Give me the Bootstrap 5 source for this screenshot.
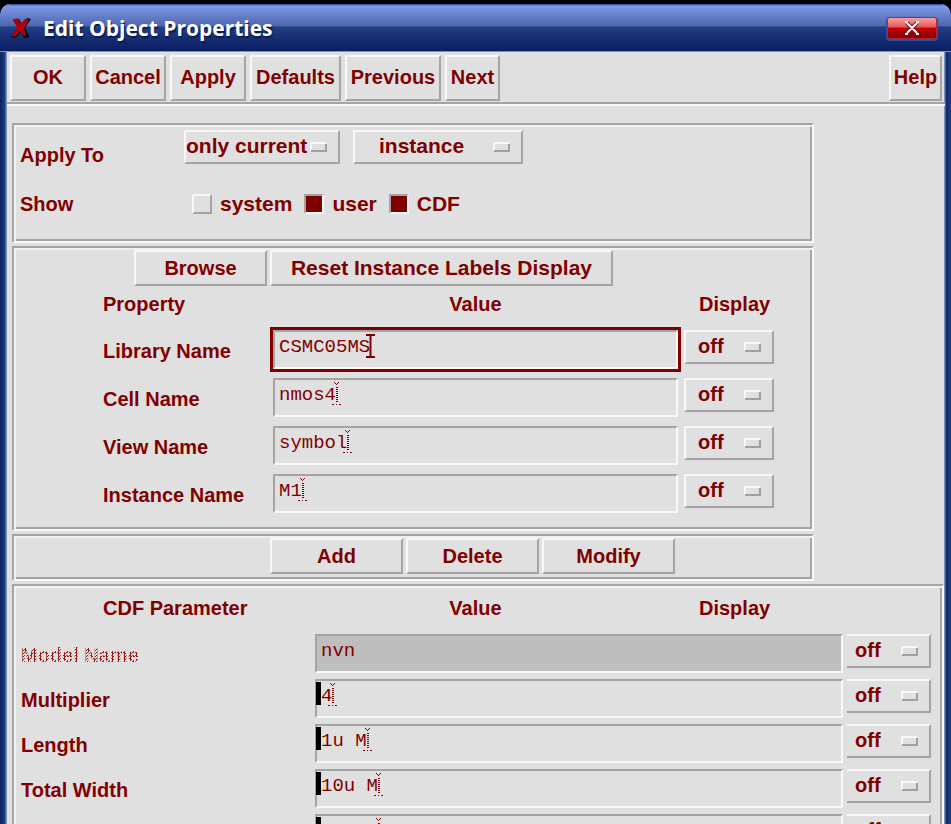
<!DOCTYPE html>
<html lang="en">
<head>
<meta charset="utf-8">
<meta name="viewport" content="width=device-width, initial-scale=1">
<title>Edit Object Properties</title>
<link href="https://cdn.jsdelivr.net/npm/bootstrap@5.3.0/dist/css/bootstrap.min.css" rel="stylesheet">
<style>
  :root { --ink: #800000; --face: #e0e0e0; --lit: #f8f8f8; --shade: #a4a4a4; }
  body { background: #000; color: var(--ink); font-family: "Liberation Sans", Arial, sans-serif; font-size: 20px; font-weight: 700; line-height: 24px; }
  .win-frame { background: linear-gradient(90deg, #0e2262, #1c3c84 5px, #8090bc 6px, #8090bc 7px, transparent 7px, transparent calc(100% - 7px), #8090bc calc(100% - 7px), #8090bc calc(100% - 6px), #102a6c calc(100% - 5px), #1c3c84), var(--face); border-radius: 10px 10px 0 0; }
  .title-strip { height: 48px; padding: 0 14px 0 11px; border-radius: 10px 10px 0 0; border-bottom: 1px solid #8090bc;
    background: linear-gradient(#1f3a80 0, #7f9bee 2px, #7890e0 5px, #4c66ac 22px, #243e84 23px, #142c70 36px, #0a1e64 47px); }
  .title-strip h1 { font-family: "Open Sans", sans-serif; font-size: 21px; font-weight: 700; line-height: 28px; color: #fff; text-shadow: 1px 2px 1px #0a1a50; }
  .shut { width: 50px; height: 22px; border: 1px solid #b02838; border-radius: 3px; background: linear-gradient(#f8a0a0, #e85858 45%, #cc0000 50%, #800000); box-shadow: 0 1px 1px 1px #34509a; }
  .client { margin: 0 6px 0 7px; }
  .bevel { border: 2px solid; border-color: var(--lit) var(--shade) var(--shade) var(--lit); border-radius: 0; background-color: var(--face); color: var(--ink); font-size: 20px; font-weight: 700; line-height: 24px; }
  .bevel.btn:hover, .bevel.btn:active { background-color: var(--face); color: var(--ink); border-color: var(--lit) var(--shade) var(--shade) var(--lit); }
  .tools { gap: 4px; padding: 3px 3px 1px; border-bottom: 2px solid var(--shade); box-shadow: 0 2px 0 var(--lit); }
  .tools .btn { height: 46px; padding: 0 2px 2px; }
  .w-ok, .w-std { width: 76px; } .w-def { width: 91px; } .w-prev { width: 96px; } .w-next { width: 55px; } .w-help { width: 53px; }
  .act .btn { height: 36px; padding: 0; width: 133px; }
  .act .btn.w-reset { width: 343px; font-size: 21px; }
  .act { gap: 3px; }
  .panels { padding: 19px 1px 0 5px; gap: 3px; }
  .groove { border: 2px solid; border-color: var(--shade) var(--lit) var(--lit) var(--shade); box-shadow: inset 2px 2px 0 #f0f0f0, inset -2px -2px 0 var(--shade); padding: 2px; }
  .short-panel { margin-right: 130px; }
  .target { padding: 5px 6px 13px; }
  .target-row { display: grid; grid-template-columns: 164px minmax(0, 1fr); height: 49px; }
  .pick { appearance: none; height: 34px; padding: 0 30px 2px 12px; box-shadow: none;
    background-image: url("data:image/svg+xml,%3Csvg xmlns='http://www.w3.org/2000/svg' width='17' height='10'%3E%3Cpath d='M1 9V1H16' fill='none' stroke='%23f8f8f8' stroke-width='2'/%3E%3Cpath d='M1 9H16V2' fill='none' stroke='%23a0a0a0' stroke-width='2'/%3E%3C/svg%3E");
    background-repeat: no-repeat; background-position: right 11px center; background-size: 17px 10px; }
  .pick:focus { box-shadow: none; border-color: var(--lit) var(--shade) var(--shade) var(--lit); }
  .pick-pair { gap: 13px; }
  .pick-now { width: 156px; padding: 0 26px 2px 0; font-size: 21px; }
  .pick-kind { width: 170px; padding-left: 24px; font-size: 21px; }
  .tick { width: 20px; height: 20px; margin: 0; border: 2px solid; border-color: var(--lit) var(--shade) var(--shade) var(--lit); border-radius: 0 !important; background: var(--face); }
  .tick:checked { background: var(--ink); border-color: var(--shade) var(--lit) var(--lit) var(--shade); }
  .ticks { padding-left: 8px; gap: 12px; font-size: 21px; }
  .ticks .opt { gap: 8px; }
  .heads, .prop { display: grid; grid-template-columns: 164px minmax(0, 1fr) 90px; column-gap: 6px; align-items: center; }
  .heads { height: 36px; margin-bottom: 8px; }
  .heads span:last-child { padding-left: 15px; }
  .props { padding: 0 36px 14px 87px; }
  .prop-list { display: grid; row-gap: 9px; }
  .indent { padding-left: 118px; }
  .indent2 { padding-left: 254px; padding-bottom: 3px; }
  .cdf { padding-top: 4px; }
  .cdf .heads { margin-left: 87px; margin-right: 166px; }
  .cdf .prop-list { padding: 0 9px 14px 5px; row-gap: 6px; }
  .cdf .prop { grid-template-columns: 290px minmax(0, 1fr) 84px; column-gap: 4px; }
  .cdf .pick { border-left: 0; padding-left: 8px; }
  .prop .pick { align-self: start; }
  .prop label { padding-top: 2px; }
  .entry { position: relative; font-family: "Liberation Mono", "Courier New", monospace; font-size: 19px; font-weight: 400; line-height: 22px; }
  .entry input { display: block; height: 39px; font: inherit; color: var(--ink); background: var(--face); border: 2px solid; border-color: var(--shade) var(--lit) var(--lit) var(--shade); border-radius: 0; padding: 4px 4px 9px; }
  .entry input:disabled { background: #bebebe; color: var(--ink); opacity: 1; }
  .entry.active input { box-shadow: 0 0 0 3px var(--ink); }
  .entry svg { position: absolute; top: 4px; left: calc(var(--n) * 1ch + 2px); width: 9px; height: 24px; pointer-events: none; }
  .changed::before { content: ""; position: absolute; left: 1px; top: 3px; width: 5px; height: 23px; background: #000; }
  .dim { color: transparent; background: repeating-conic-gradient(#981818 0 25%, #e0e0e0 0 50%) 0 0 / 3px 3px; -webkit-background-clip: text; background-clip: text; }
</style>
<script src="https://cdn.jsdelivr.net/npm/bootstrap@5.3.0/dist/js/bootstrap.bundle.min.js"></script>
</head>
<body class="vh-100 overflow-hidden">
<svg class="d-none" aria-hidden="true">
  <symbol id="bar" viewBox="0 0 9 24"><path d="M0 1H9M0 23H9M4.500 1V23" fill="none" stroke="#800000" stroke-width="2"/></symbol>
  <symbol id="dots" viewBox="0 0 9 24"><path d="M2 0h1v1h-1zM6 0h1v1h-1zM3 1h1v1h-1zM5 1h1v1h-1zM4 2h1v1h-1zM4 5h2v1h-2zM4 7h2v1h-2zM4 9h2v1h-2zM4 11h2v1h-2zM4 13h2v1h-2zM4 15h2v1h-2zM4 17h2v1h-2zM4 19h2v1h-2zM0 22h2v1h-2zM4 22h1v1h-1zM7 22h2v1h-2z" fill="#800000"/></symbol>
</svg>
<div class="pt-1 h-100">
<main class="win-frame h-100 overflow-hidden">
  <header class="title-strip d-flex align-items-center">
    <svg width="20" height="22" viewBox="0 0 20 22" aria-hidden="true"><path d="M2 3Q5 1 8 2L11 7 16 1 20 2 14 11 17 17 19 20 13 21 10 15 5 21 0 20 7 11Z" fill="#080818"/><path d="M2 3Q5 1 7 2L10 7 14 2 18 2 13 11 15 18Q14 20 12 18L9 14 4 20 1 19 6 10Z" fill="#b00008"/></svg>
    <h1 class="m-0 ms-2 ps-1 flex-grow-1">Edit Object Properties</h1>
    <button type="button" class="shut p-0 d-flex align-items-center justify-content-center" aria-label="Close"><svg width="16" height="14" viewBox="0 0 16 14"><path d="M3 2L13 12M13 2L3 12" fill="none" stroke="#801018" stroke-width="4"/><path d="M3 2L13 12M13 2L3 12M1 1H4M12 1H15M1 13H4M12 13H15" fill="none" stroke="#fff" stroke-width="2"/></svg></button>
  </header>
  <form class="client">
    <div class="tools d-flex">
      <button type="button" class="btn bevel w-ok">OK</button>
      <button type="button" class="btn bevel w-std">Cancel</button>
      <button type="button" class="btn bevel w-std">Apply</button>
      <button type="button" class="btn bevel w-def">Defaults</button>
      <button type="button" class="btn bevel w-prev">Previous</button>
      <button type="button" class="btn bevel w-next">Next</button>
      <button type="button" class="btn bevel w-help ms-auto">Help</button>
    </div>
    <div class="panels d-flex flex-column">
      <section class="groove short-panel target">
        <div class="target-row">
          <label for="scope" class="align-self-center">Apply To</label>
          <div class="pick-pair d-flex align-items-start">
            <select id="scope" class="form-select bevel pick pick-now"><option>only current</option></select>
            <select class="form-select bevel pick pick-kind" aria-label="Object kind"><option>instance</option></select>
          </div>
        </div>
        <div class="target-row align-items-center">
          <span>Show</span>
          <div class="ticks d-flex">
            <div class="opt d-flex align-items-center"><input type="checkbox" id="c1" class="form-check-input tick"><label for="c1">system</label></div>
            <div class="opt d-flex align-items-center"><input type="checkbox" id="c2" class="form-check-input tick" checked><label for="c2">user</label></div>
            <div class="opt d-flex align-items-center"><input type="checkbox" id="c3" class="form-check-input tick" checked><label for="c3">CDF</label></div>
          </div>
        </div>
      </section>

      <section class="groove short-panel">
        <div class="act d-flex indent">
          <button type="button" class="btn bevel">Browse</button>
          <button type="button" class="btn bevel w-reset">Reset Instance Labels Display</button>
        </div>
        <div class="props">
          <div class="heads"><span>Property</span><span class="text-center">Value</span><span>Display</span></div>
          <div class="prop-list">
            <div class="prop"><label for="p1">Library Name</label>
              <div class="entry active"><input id="p1" type="text" class="form-control" value="CSMC05MS"><svg style="--n:8"><use href="#bar"/></svg></div>
              <select class="form-select bevel pick" aria-label="Library Name display"><option>off</option></select></div>
            <div class="prop"><label for="p2">Cell Name</label>
              <div class="entry"><input id="p2" type="text" class="form-control" value="nmos4"><svg style="--n:5"><use href="#dots"/></svg></div>
              <select class="form-select bevel pick" aria-label="Cell Name display"><option>off</option></select></div>
            <div class="prop"><label for="p3">View Name</label>
              <div class="entry"><input id="p3" type="text" class="form-control" value="symbol"><svg style="--n:6"><use href="#dots"/></svg></div>
              <select class="form-select bevel pick" aria-label="View Name display"><option>off</option></select></div>
            <div class="prop"><label for="p4">Instance Name</label>
              <div class="entry"><input id="p4" type="text" class="form-control" value="M1"><svg style="--n:2"><use href="#dots"/></svg></div>
              <select class="form-select bevel pick" aria-label="Instance Name display"><option>off</option></select></div>
          </div>
        </div>
      </section>

      <section class="groove short-panel">
        <div class="act d-flex indent2">
          <button type="button" class="btn bevel">Add</button>
          <button type="button" class="btn bevel">Delete</button>
          <button type="button" class="btn bevel">Modify</button>
        </div>
      </section>

      <section class="groove cdf">
        <div class="heads"><span>CDF Parameter</span><span class="text-center">Value</span><span>Display</span></div>
        <div class="prop-list">
          <div class="prop"><label for="d1"><span class="dim">Model Name</span></label>
            <div class="entry"><input id="d1" type="text" class="form-control" value="nvn" disabled></div>
            <select class="form-select bevel pick" aria-label="Model Name display"><option>off</option></select></div>
          <div class="prop"><label for="d2">Multiplier</label>
            <div class="entry changed"><input id="d2" type="text" class="form-control" value="4"><svg style="--n:1"><use href="#dots"/></svg></div>
            <select class="form-select bevel pick" aria-label="Multiplier display"><option>off</option></select></div>
          <div class="prop"><label for="d3">Length</label>
            <div class="entry changed"><input id="d3" type="text" class="form-control" value="1u M"><svg style="--n:4"><use href="#dots"/></svg></div>
            <select class="form-select bevel pick" aria-label="Length display"><option>off</option></select></div>
          <div class="prop"><label for="d4">Total Width</label>
            <div class="entry changed"><input id="d4" type="text" class="form-control" value="10u M"><svg style="--n:5"><use href="#dots"/></svg></div>
            <select class="form-select bevel pick" aria-label="Total Width display"><option>off</option></select></div>
          <div class="prop"><span></span>
            <div class="entry changed"><input type="text" class="form-control" value="10u M" aria-label="Width"><svg style="--n:5"><use href="#dots"/></svg></div>
            <select class="form-select bevel pick" aria-label="Width display"><option>off</option></select></div>
        </div>
      </section>
    </div>
  </form>
</main>
</div>
</body>
</html>
